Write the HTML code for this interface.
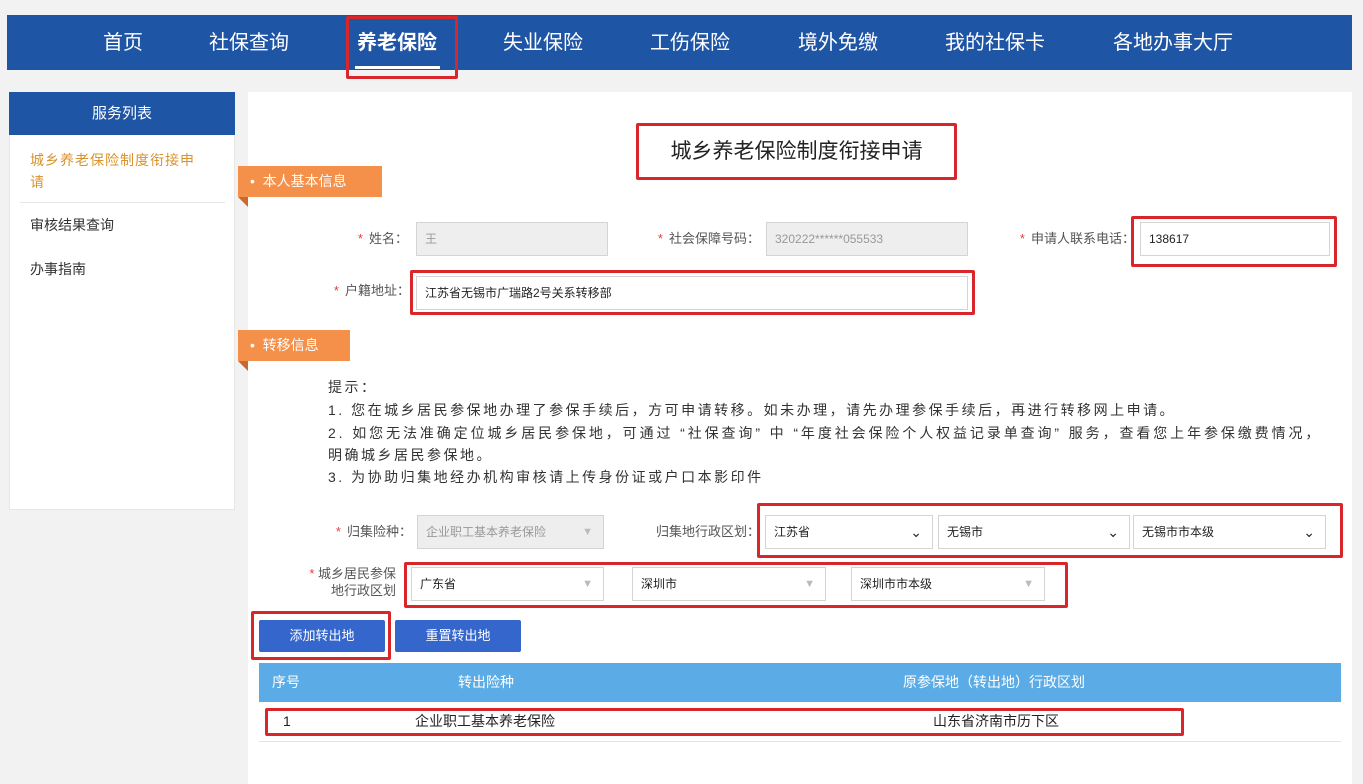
<!DOCTYPE html>
<html><head><meta charset="utf-8"><style>
*{margin:0;padding:0;box-sizing:border-box}
body{width:1363px;height:784px;background:#f2f2f2;position:relative;overflow:hidden;font-family:"Liberation Sans","Noto Sans CJK SC",sans-serif;color:#333}
.a{position:absolute}
.nav{left:7px;top:15px;width:1345px;height:55px;background:#1f55a5}
.ni{position:absolute;top:29px;color:#fff;font-size:20px;line-height:28px;transform:translateX(-50%);white-space:nowrap}
.red{position:absolute;border:3px solid #d9262a;border-radius:2px}
.inp{position:absolute;height:34px;border:1px solid #d4d4d4;background:#fff;font-size:12px;line-height:32px;padding-left:8px;color:#222}
.dis{background:#eee;color:#999}
.lbl{position:absolute;font-size:13px;color:#555;text-align:right;line-height:34px;white-space:nowrap}
.lbl b{color:#e04040;font-weight:normal;margin-right:6px}
.tab{position:absolute;left:238px;height:31px;background:#f5904a;color:#fff;font-size:14px;line-height:31px;padding-left:12px}
.tab:after{content:"";position:absolute;left:0;top:31px;border-top:10px solid #c86a30;border-left:10px solid transparent}
.arr{position:absolute;right:10px;top:0;font-size:11px;color:#bbb}
.sel .arr{color:#222;font-size:14px}
.btn{position:absolute;top:620px;height:32px;width:126px;background:#3566cc;color:#fff;font-size:13px;line-height:32px;text-align:center;border-radius:2px}
.tip{position:absolute;left:328px;font-size:14px;line-height:22px;color:#333;white-space:nowrap;letter-spacing:2.5px}
</style></head><body>
<div class="a nav"></div>
<div class="ni" style="left:123px">首页</div>
<div class="ni" style="left:249px">社保查询</div>
<div class="ni" style="left:397px;font-weight:bold">养老保险</div>
<div class="a" style="left:355px;top:66px;width:85px;height:3px;background:#fff"></div>
<div class="ni" style="left:543px">失业保险</div>
<div class="ni" style="left:690px">工伤保险</div>
<div class="ni" style="left:838px">境外免缴</div>
<div class="ni" style="left:995px">我的社保卡</div>
<div class="ni" style="left:1173px">各地办事大厅</div>
<div class="red" style="left:346px;top:16px;width:112px;height:63px"></div>

<div class="a" style="left:9px;top:92px;width:226px;height:418px;background:#fff;border:1px solid #e6e6e6"></div>
<div class="a" style="left:9px;top:92px;width:226px;height:43px;background:#1f55a5;color:#fff;font-size:15px;line-height:43px;text-align:center">服务列表</div>
<div class="a" style="left:30px;top:149px;width:175px;font-size:14px;line-height:22px;color:#d9932c;letter-spacing:1px;word-break:break-all">城乡养老保险制度衔接申请</div>
<div class="a" style="left:20px;top:202px;width:205px;height:1px;background:#e6e6e6"></div>
<div class="a" style="left:30px;top:214px;font-size:14px;line-height:22px">审核结果查询</div>
<div class="a" style="left:30px;top:258px;font-size:14px;line-height:22px">办事指南</div>

<div class="a" style="left:248px;top:92px;width:1104px;height:692px;background:#fff"></div>
<div class="red" style="left:636px;top:123px;width:321px;height:57px"></div>
<div class="a" style="left:636px;top:123px;width:321px;height:57px;font-size:21px;line-height:57px;text-align:center;color:#222">城乡养老保险制度衔接申请</div>

<div class="tab" style="top:166px;width:144px">•&nbsp;&nbsp;本人基本信息</div>
<div class="lbl" style="left:300px;width:108px;top:222px"><b>*</b>姓名：</div>
<div class="inp dis" style="left:416px;top:222px;width:192px">王</div>
<div class="lbl" style="left:620px;width:140px;top:222px"><b>*</b>社会保障号码：</div>
<div class="inp dis" style="left:766px;top:222px;width:202px">320222******055533</div>
<div class="lbl" style="left:980px;width:155px;top:222px"><b>*</b>申请人联系电话：</div>
<div class="inp" style="left:1140px;top:222px;width:190px">138617</div>
<div class="red" style="left:1131px;top:216px;width:206px;height:51px"></div>
<div class="lbl" style="left:300px;width:110px;top:274px"><b>*</b>户籍地址：</div>
<div class="inp" style="left:416px;top:276px;width:552px">江苏省无锡市广瑞路2号关系转移部</div>
<div class="red" style="left:410px;top:270px;width:565px;height:45px"></div>

<div class="tab" style="top:330px;width:112px">•&nbsp;&nbsp;转移信息</div>
<div class="tip" style="top:376px">提示：</div>
<div class="tip" style="top:399px">1. 您在城乡居民参保地办理了参保手续后，方可申请转移。如未办理，请先办理参保手续后，再进行转移网上申请。</div>
<div class="tip" style="top:422px;letter-spacing:2.9px">2. 如您无法准确定位城乡居民参保地，可通过 “社保查询” 中 “年度社会保险个人权益记录单查询” 服务，查看您上年参保缴费情况，</div>
<div class="tip" style="top:444px">明确城乡居民参保地。</div>
<div class="tip" style="top:466px">3. 为协助归集地经办机构审核请上传身份证或户口本影印件</div>

<div class="lbl" style="left:300px;width:112px;top:515px"><b>*</b>归集险种：</div>
<div class="inp dis" style="left:417px;top:515px;width:187px">企业职工基本养老保险<span class="arr">▼</span></div>
<div class="lbl" style="left:620px;width:140px;top:515px">归集地行政区划：</div>
<div class="inp sel" style="left:765px;top:515px;width:168px">江苏省<span class="arr">⌄</span></div>
<div class="inp sel" style="left:938px;top:515px;width:192px">无锡市<span class="arr">⌄</span></div>
<div class="inp sel" style="left:1133px;top:515px;width:193px">无锡市市本级<span class="arr">⌄</span></div>
<div class="red" style="left:757px;top:503px;width:586px;height:55px"></div>

<div class="a" style="left:280px;top:565px;width:116px;font-size:13px;line-height:17px;text-align:right;color:#555"><span style="color:#e04040">*</span> 城乡居民参保<br>地行政区划</div>
<div class="inp" style="left:411px;top:567px;width:193px">广东省<span class="arr">▼</span></div>
<div class="inp" style="left:632px;top:567px;width:194px">深圳市<span class="arr">▼</span></div>
<div class="inp" style="left:851px;top:567px;width:194px">深圳市市本级<span class="arr">▼</span></div>
<div class="red" style="left:404px;top:562px;width:664px;height:46px"></div>

<div class="btn" style="left:259px">添加转出地</div>
<div class="btn" style="left:395px">重置转出地</div>
<div class="red" style="left:251px;top:611px;width:140px;height:49px"></div>

<div class="a" style="left:259px;top:663px;width:1082px;height:39px;background:#5aabe6;color:#fff;font-size:14px;line-height:39px">
<span class="a" style="left:13px">序号</span><span class="a" style="left:199px">转出险种</span><span class="a" style="left:644px">原参保地（转出地）行政区划</span></div>
<div class="a" style="left:259px;top:702px;width:1082px;height:40px;border-bottom:1px solid #e3e3e3;font-size:14px;line-height:38px;color:#222">
<span class="a" style="left:24px">1</span><span class="a" style="left:156px">企业职工基本养老保险</span><span class="a" style="left:674px">山东省济南市历下区</span></div>
<div class="red" style="left:265px;top:708px;width:919px;height:28px"></div>
</body></html>
